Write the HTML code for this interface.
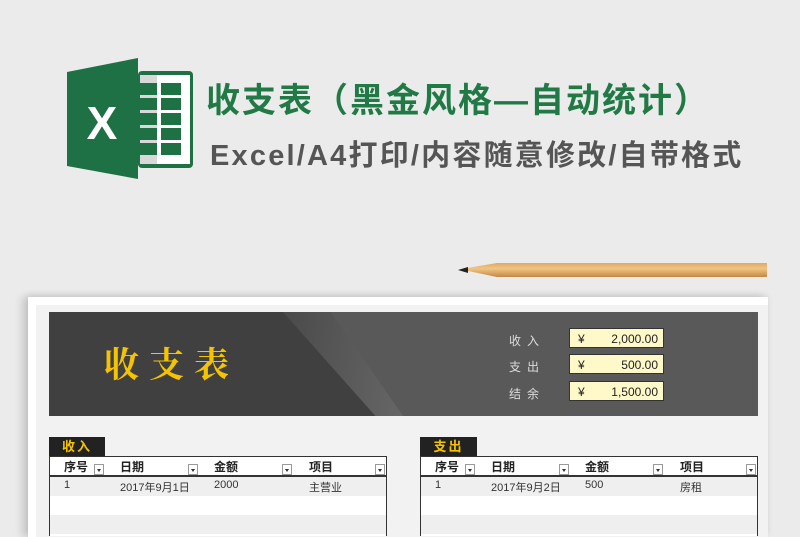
<!DOCTYPE html>
<html><head><meta charset="utf-8"><style>
*{margin:0;padding:0;box-sizing:border-box}
body{width:800px;height:526px;background:#ebebeb;position:relative;overflow:hidden;font-family:"Liberation Sans","Noto Sans CJK SC",sans-serif}
.abs{position:absolute}
.t1{left:206px;top:73px;font-size:34px;font-weight:bold;color:#217a46;letter-spacing:2px;white-space:nowrap}
.t2{left:210px;top:132px;font-size:29px;color:#555;white-space:nowrap;font-weight:bold;letter-spacing:2.2px}
.paper{left:28px;top:297px;width:740px;height:240px;background:#f2f2f2;box-shadow:-6px 0 8px rgba(0,0,0,.15),0 -2px 6px rgba(0,0,0,.08);border-top:8px solid #fff;border-left:8px solid #fff}
.lab{color:#ddd;font-size:12px;letter-spacing:6px}
.box{background:#fff8c8;width:95px;height:20px;font-size:12px;color:#222;border:1px solid #333}
.box span{position:absolute;top:3px}
.tab{background:#222;color:#f5c400;font-weight:bold;font-size:13px;height:19px;text-align:center;line-height:19px;letter-spacing:2px}
.tbl{border:1.5px solid #333;border-bottom:none;background:#fff;height:80px}
.hd{height:20px;border-bottom:2px solid #333;font-size:12px;font-weight:bold;color:#222;position:relative;background:#fff}
.hd span{position:absolute;top:1px}
.dd{position:absolute;top:7px;width:10px;height:11px;border:1px solid #999;background:#fff}
.dd:after{content:"";position:absolute;left:2px;top:4px;border:2.5px solid transparent;border-top:3px solid #333}
.row{height:19px;font-size:11px;color:#333;position:relative}
.row span{position:absolute;top:2px}
</style></head><body>
<svg class="abs" style="left:60px;top:50px" width="140" height="135">
<rect x="78" y="21" width="55" height="97" rx="4" fill="#1e7145"/>
<rect x="80" y="25" width="50" height="89" fill="#fff"/>
<rect x="80" y="25" width="17" height="89" fill="#d8d8d8"/>
<g fill="#1e7145">
<rect x="80" y="33" width="17" height="12"/><rect x="101" y="33" width="20" height="12"/>
<rect x="80" y="48" width="17" height="12"/><rect x="101" y="48" width="20" height="12"/>
<rect x="80" y="63" width="17" height="12"/><rect x="101" y="63" width="20" height="12"/>
<rect x="80" y="78" width="17" height="12"/><rect x="101" y="78" width="20" height="12"/>
<rect x="80" y="93" width="17" height="12"/><rect x="101" y="93" width="20" height="12"/>
</g>
<polygon points="7,22 78,8 78,129 7,116" fill="#1e7145"/>
<text x="42" y="89" font-family="Liberation Sans" font-weight="bold" font-size="46" fill="#fff" text-anchor="middle">X</text>
</svg>
<div class="abs t1">收支表（黑金风格—自动统计）</div>
<div class="abs t2">Excel/A4打印/内容随意修改/自带格式</div>
<div class="abs" style="left:460px;top:263px;width:307px;height:14px;background:linear-gradient(#e0a860,#f0c585 40%,#c48745);clip-path:polygon(0 45%,12% 0,100% 0,100% 100%,12% 100%);box-shadow:0 4px 6px rgba(0,0,0,.2)"></div>
<div class="abs" style="left:458px;top:267px;width:10px;height:6px;background:#222;clip-path:polygon(0 50%,100% 0,100% 100%)"></div>
<div class="abs paper"></div>
<div class="abs" style="left:49px;top:312px;width:709px;height:104px;background:#595959"></div>
<div class="abs" style="left:49px;top:312px;width:330px;height:104px;background:#404040;clip-path:polygon(0 0,71% 0,100% 100%,0 100%)"></div>
<div class="abs" style="left:283px;top:312px;width:120px;height:104px;background:linear-gradient(100deg,#4a4a4a,#666);clip-path:polygon(0 0,40% 0,100% 100%,77% 100%)"></div>
<div class="abs" style="left:104px;top:338px;font-size:35px;color:#f5c400;font-weight:bold;letter-spacing:10px;font-family:'Noto Serif CJK SC',serif">收支表</div>
<div class="abs lab" style="left:509px;top:332px">收入</div>
<div class="abs lab" style="left:509px;top:358px">支出</div>
<div class="abs lab" style="left:509px;top:385px">结余</div>
<div class="abs box" style="left:569px;top:328px"><span style="left:8px">¥</span><span style="right:5px">2,000.00</span></div>
<div class="abs box" style="left:569px;top:354px"><span style="left:8px">¥</span><span style="right:5px">500.00</span></div>
<div class="abs box" style="left:569px;top:381px"><span style="left:8px">¥</span><span style="right:5px">1,500.00</span></div>

<div class="abs tab" style="left:49px;top:437px;width:56px">收入</div>
<div class="abs tbl" style="left:49px;top:456px;width:338px">
<div class="hd"><span style="left:14px">序号</span><div class="dd" style="left:44px"></div><span style="left:70px">日期</span><div class="dd" style="left:138px"></div><span style="left:164px">金额</span><div class="dd" style="left:232px"></div><span style="left:259px">项目</span><div class="dd" style="left:325px"></div></div>
<div class="row" style="background:#efefef"><span style="left:14px">1</span><span style="left:70px">2017年9月1日</span><span style="left:164px">2000</span><span style="left:259px">主营业</span></div>
<div class="row" style="background:#fff"></div>
<div class="row" style="background:#efefef"></div>
</div>
<div class="abs tab" style="left:420px;top:437px;width:57px">支出</div>
<div class="abs tbl" style="left:420px;top:456px;width:338px">
<div class="hd"><span style="left:14px">序号</span><div class="dd" style="left:44px"></div><span style="left:70px">日期</span><div class="dd" style="left:138px"></div><span style="left:164px">金额</span><div class="dd" style="left:232px"></div><span style="left:259px">项目</span><div class="dd" style="left:325px"></div></div>
<div class="row" style="background:#efefef"><span style="left:14px">1</span><span style="left:70px">2017年9月2日</span><span style="left:164px">500</span><span style="left:259px">房租</span></div>
<div class="row" style="background:#fff"></div>
<div class="row" style="background:#efefef"></div>
</div>
</body></html>
